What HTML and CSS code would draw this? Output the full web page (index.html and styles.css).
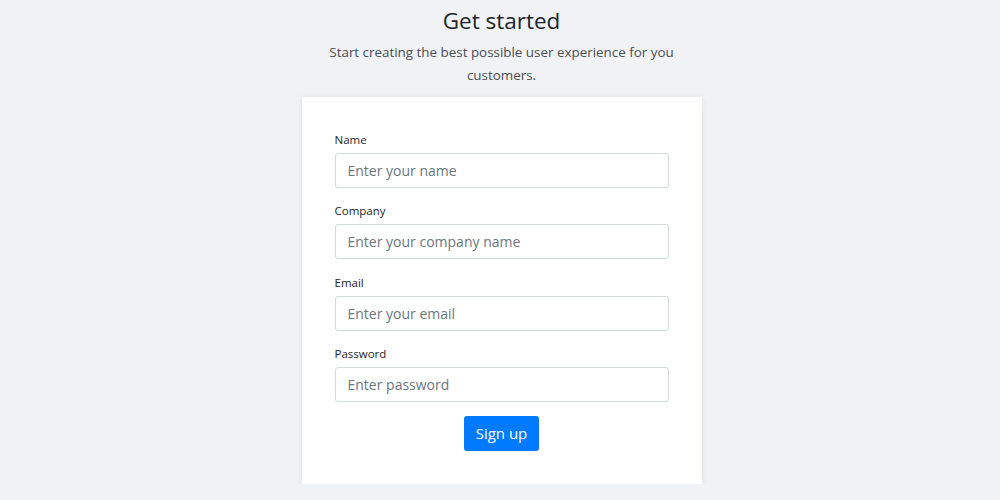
FILE: index.html
```html
<!DOCTYPE html>
<html lang="en">
<head>
<meta charset="utf-8">
<title>Get started</title>
<link rel="stylesheet" href="styles.css">
</head>
<body>
<main class="page">
  <header class="intro">
    <h1 class="title">Get started</h1>
    <p class="subtitle">Start creating the best possible user experience for you customers.</p>
  </header>
  <form class="card">
    <div class="field">
      <label class="label" for="name">Name</label>
      <input class="input" id="name" type="text" placeholder="Enter your name">
    </div>
    <div class="field">
      <label class="label" for="company">Company</label>
      <input class="input" id="company" type="text" placeholder="Enter your company name">
    </div>
    <div class="field">
      <label class="label" for="email">Email</label>
      <input class="input" id="email" type="email" placeholder="Enter your email">
    </div>
    <div class="field">
      <label class="label" for="password">Password</label>
      <input class="input" id="password" type="password" placeholder="Enter password">
    </div>
    <div class="actions">
      <button class="button" type="button">Sign up</button>
    </div>
  </form>
</main>
</body>
</html>
```
FILE: styles.css
```css
* { box-sizing: border-box; }
html, body {
  margin: 0;
  padding: 0;
  background: #f1f2f6;
  font-family: "Open Sans", "Liberation Sans", sans-serif;
  color: #212529;
}
.page {
  display: flex;
  flex-direction: column;
  align-items: center;
  padding-top: 6px;
  padding-left: 3px;
}
.intro {
  display: flex;
  flex-direction: column;
  align-items: center;
  text-align: center;
}
.title {
  margin: 0;
  font-size: 22.5px;
  line-height: 30px;
  font-weight: 400;
  color: #212529;
}
.subtitle {
  margin: 5px 0 0;
  max-width: 370px;
  font-size: 13.4px;
  line-height: 23px;
  color: #4a4d52;
}
.card {
  margin-top: 10px;
  width: 400px;
  background: #fff;
  padding: 33px;
  box-shadow: 0 2px 8px rgba(0, 0, 0, 0.08);
  display: flex;
  flex-direction: column;
}
.field {
  display: flex;
  flex-direction: column;
  margin-bottom: 13.4px;
}
.label {
  font-size: 11.5px;
  line-height: 18px;
  margin-top: 1px;
  margin-bottom: 4px;
  color: #212529;
}
.input {
  width: 334px;
  height: 35px;
  border: 1px solid #cfdcd8;
  border-radius: 3px;
  padding: 0 12px;
  font-family: inherit;
  font-size: 14px;
  color: #495057;
  background: #fff;
}
.input::placeholder { color: #6c757d; opacity: 1; }
.actions {
  display: flex;
  justify-content: center;
}
.button {
  width: 75px;
  height: 35px;
  border: none;
  border-radius: 3px;
  background: #007bff;
  color: #fff;
  font-family: inherit;
  font-size: 15px;
  padding: 0;
}
```
